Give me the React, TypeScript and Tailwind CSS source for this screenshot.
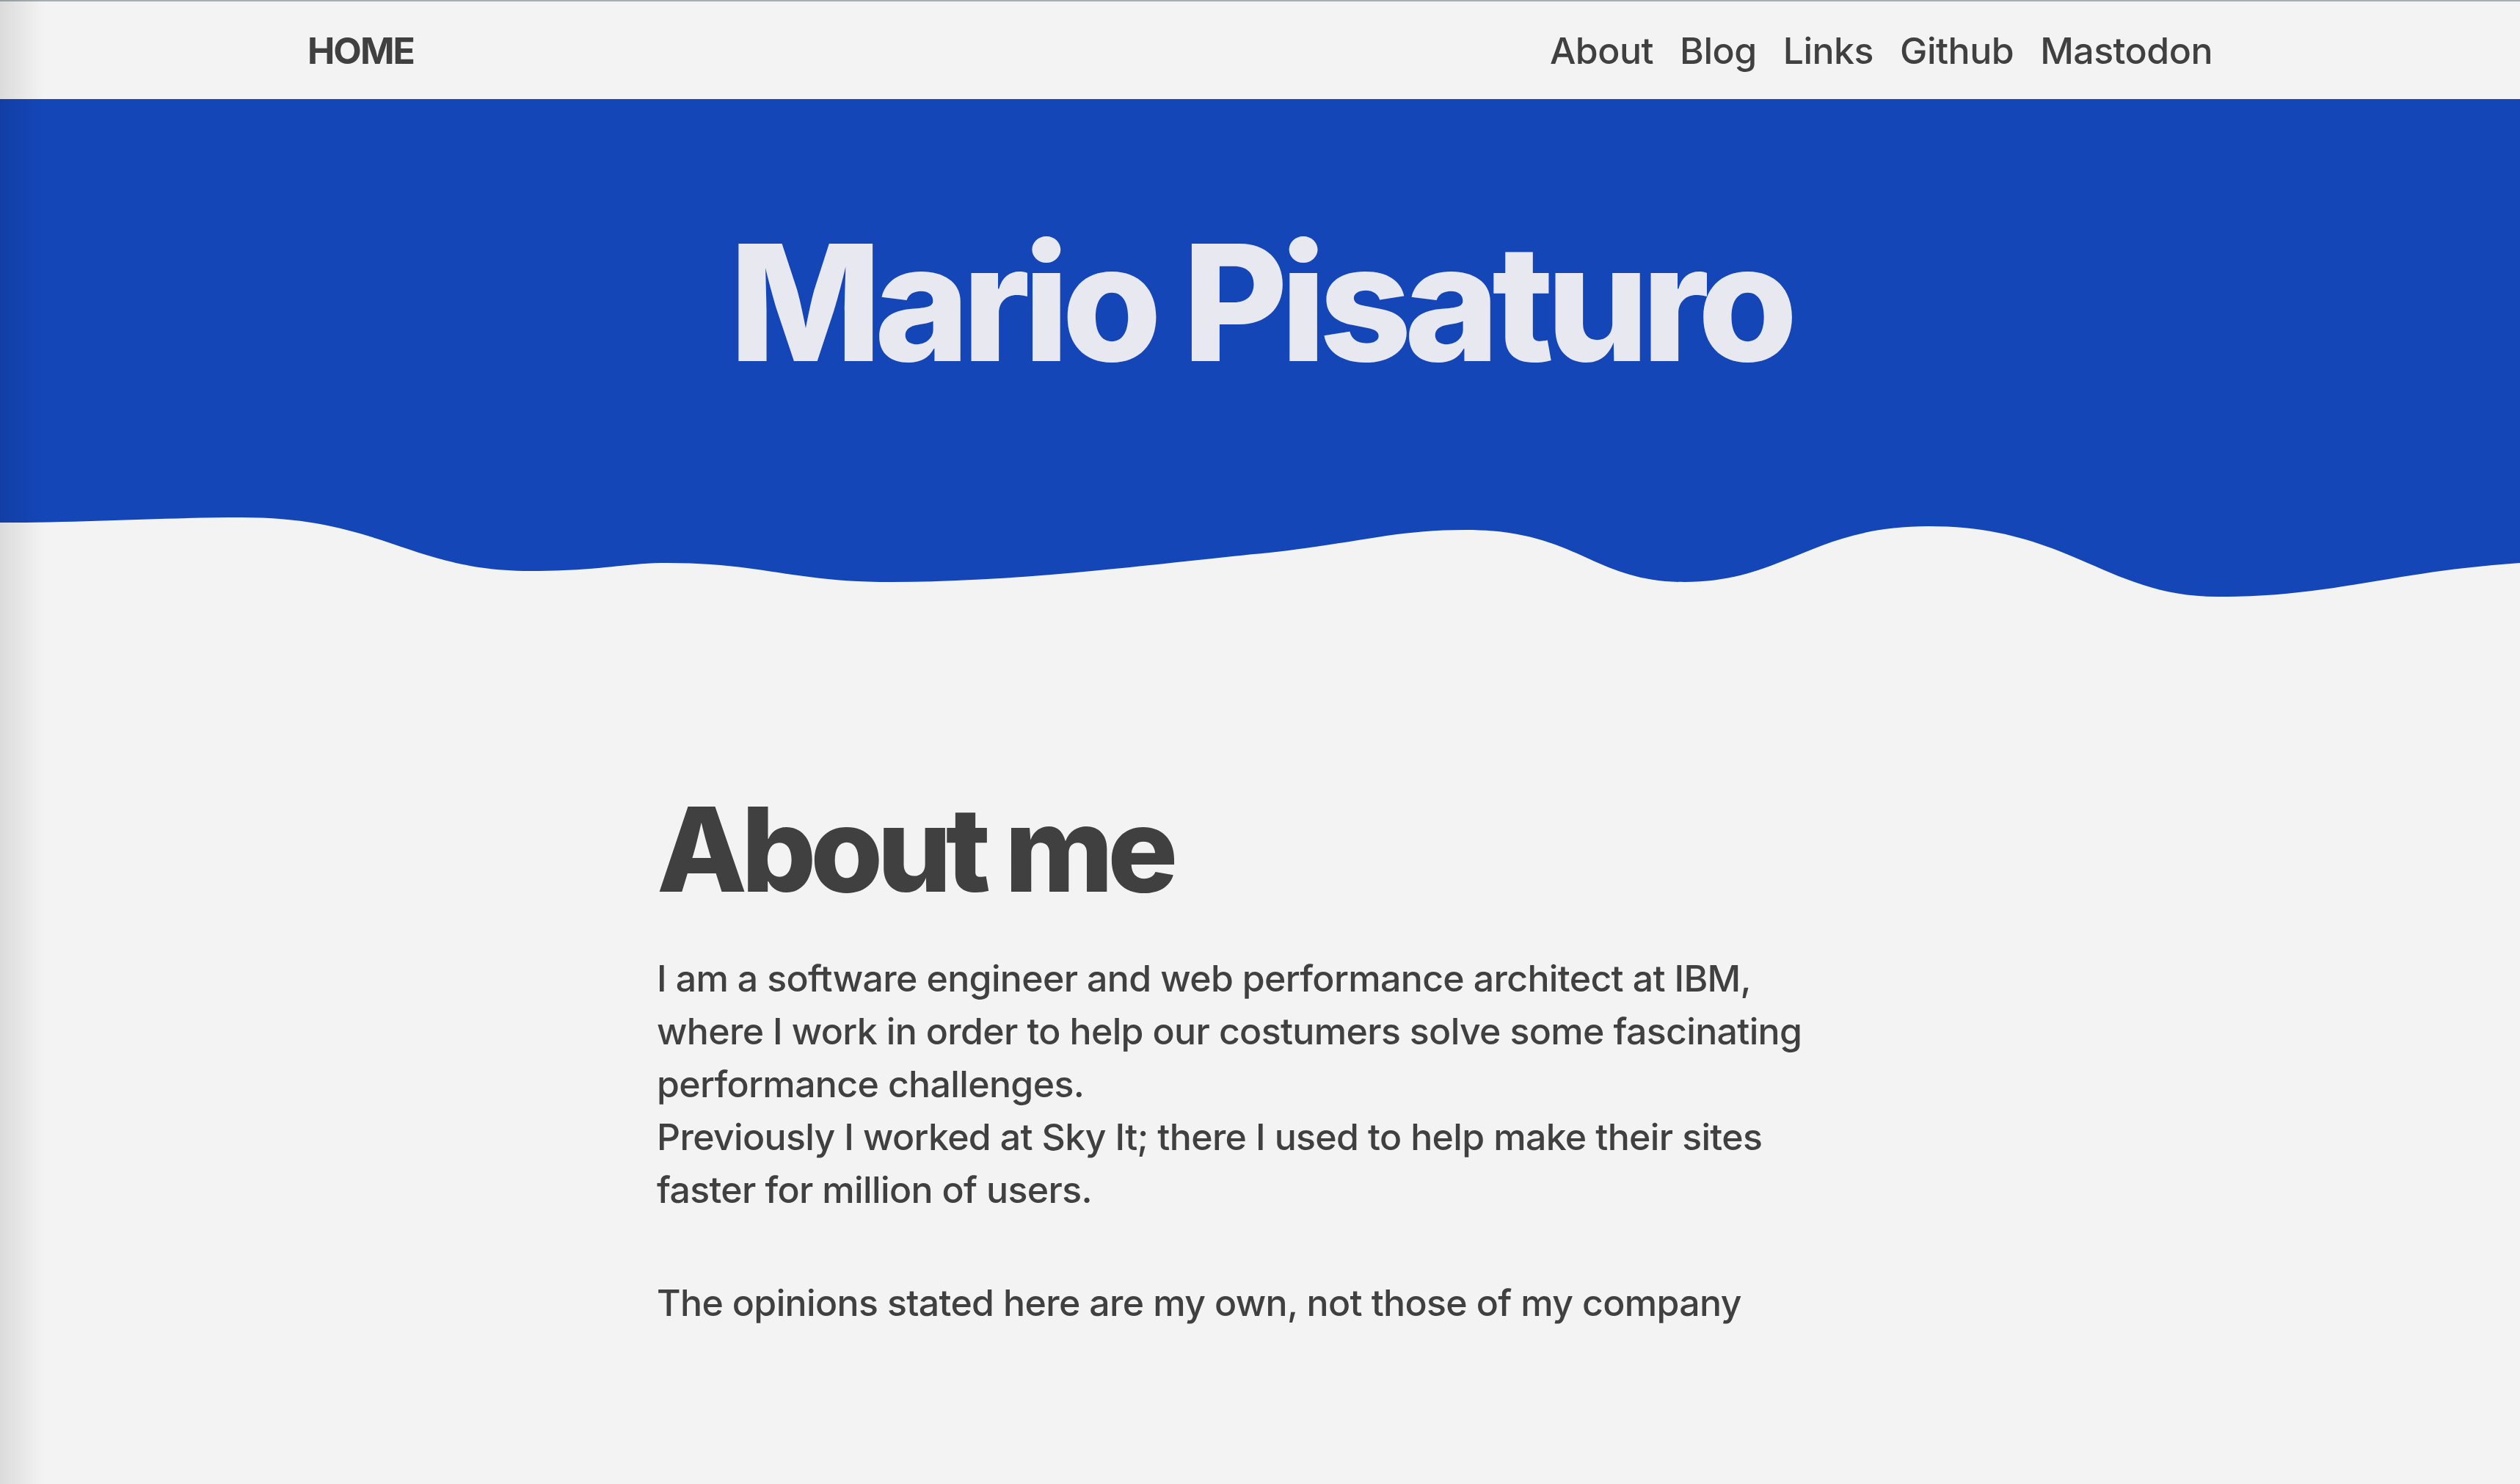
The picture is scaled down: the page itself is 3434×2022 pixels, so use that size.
const links = ['About', 'Blog', 'Links', 'Github', 'Mastodon']

const Wave = () => (
  <svg
    className="block w-full h-[120px]"
    viewBox="0 0 3434 120"
    preserveAspectRatio="none"
    aria-hidden="true"
  >
    <path
      fill="#1446b8"
      d="M0,0 L0,12 C120,12 220,5 329,5 C520,5 560,78 723,78 C820,78 850,67 909,67 C1040,67 1080,93 1215,93 C1400,93 1600,65 1730,53 C1850,40 1900,22 1997,22 C2150,22 2170,93 2295,93 C2430,93 2470,17 2628,17 C2820,17 2870,113 3022,113 C3180,113 3250,80 3434,67 L3434,0 Z"
    />
  </svg>
)

export default function App() {
  return (
    <div className="relative min-h-screen overflow-hidden bg-[#f3f3f3] font-['Inter','Liberation_Sans',sans-serif] text-[#404040]">
      <div className="h-[2px] bg-[#a4afb1]" />

      <nav className="h-[133px] flex items-center">
        <div className="mx-auto w-[2596px] flex items-center justify-between">
          <a href="#" className="text-[50px] font-bold tracking-[-0.04em] leading-none">
            HOME
          </a>
          <ul className="flex gap-[36px] text-[50px] font-medium leading-none tracking-[-0.01em]">
            {links.map((l) => (
              <li key={l}>
                <a href="#">{l}</a>
              </li>
            ))}
          </ul>
        </div>
      </nav>

      <header className="bg-[#1446b8] h-[565px] pt-[167px]">
        <h1 className="text-center text-[220px] leading-none font-extrabold tracking-[-0.045em] text-[#e8e9f0]">
          Mario Pisaturo
        </h1>
      </header>
      <Wave />

      <main className="mx-auto w-[1644px] pt-[257px] pb-[200px]">
        <h2 className="text-[160px] leading-none font-extrabold tracking-[-0.05em]">
          About me
        </h2>
        <p className="mt-[60px] max-w-[1600px] text-[50px] font-medium leading-[72px] tracking-[-0.65px]">
          I am a software engineer and web performance architect at IBM, where I work in order to
          help our costumers solve some fascinating performance challenges.
          <br />
          Previously I worked at Sky It; there I used to help make their sites faster for million
          of users.
        </p>
        <p className="mt-[82px] text-[50px] font-medium leading-[72px] tracking-[-0.65px]">
          The opinions stated here are my own, not those of my company
        </p>
      </main>

      <div className="pointer-events-none absolute inset-y-0 left-0 w-[60px] bg-linear-to-r from-black/10 to-transparent" />
    </div>
  )
}
